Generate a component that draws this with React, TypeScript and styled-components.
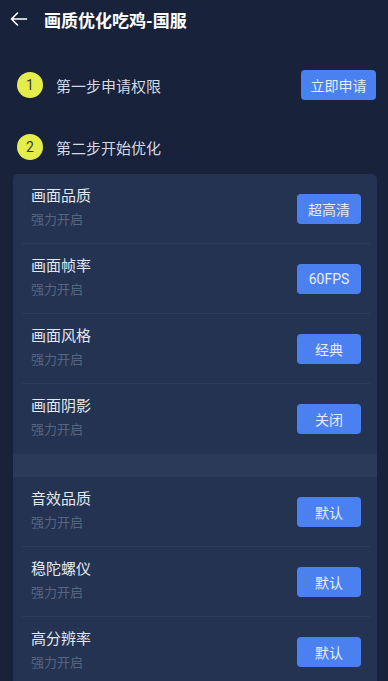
import React from 'react';
import styled, { createGlobalStyle } from 'styled-components';

const GlobalStyle = createGlobalStyle`
  html, body {
    margin: 0;
    padding: 0;
    background-color: #18223a;
    font-family: Roboto, "Noto Sans CJK SC", sans-serif;
  }
`;

const Page = styled.div`
  width: 388px;
  min-height: 681px;
  background-color: #18223a;
  overflow: hidden;
`;

const Header = styled.div`
  display: flex;
  align-items: center;
  height: 38px;
  padding-left: 9px;
`;

const BackIcon = styled.svg`
  width: 19px;
  height: 18px;
  margin-right: 16px;
`;

const Title = styled.div`
  font-size: 17px;
  font-weight: 700;
  color: #ffffff;
`;

const Steps = styled.div`
  display: flex;
  flex-direction: column;
  gap: 32px;
  padding: 32px 12px 0 17px;
`;

const StepRow = styled.div`
  display: flex;
  align-items: center;
  height: 30px;
`;

const StepNum = styled.div`
  width: 26px;
  height: 26px;
  border-radius: 50%;
  background-color: #e4ee4a;
  color: #3a3d2c;
  font-size: 14px;
  display: flex;
  align-items: center;
  justify-content: center;
  margin-right: 13px;
`;

const StepText = styled.div`
  flex: 1;
  font-size: 15px;
  color: #d3d9e3;
`;

const Button = styled.div<{ $w: number }>`
  width: ${(p) => p.$w}px;
  height: 30px;
  border-radius: 4px;
  background-color: #4a80f0;
  color: #e8eefc;
  font-size: 14px;
  display: flex;
  align-items: center;
  justify-content: center;
  flex-shrink: 0;
`;

const Card = styled.div`
  margin: 12px 11px 0 13px;
  background-color: #243352;
  border-radius: 5px;
  overflow: hidden;
`;

const Row = styled.div<{ $last?: boolean }>`
  display: flex;
  align-items: center;
  height: 69px;
  margin: 0 7px 0 9px;
  padding: 0 9px;
  border-bottom: 1px solid ${(p) => (p.$last ? 'transparent' : '#2c3c5b')};
`;

const Info = styled.div`
  flex: 1;
  display: flex;
  flex-direction: column;
  gap: 5px;
  padding-bottom: 2px;
`;

const ItemTitle = styled.div`
  font-size: 15px;
  line-height: 20px;
  color: #e2e7ef;
`;

const ItemSub = styled.div`
  font-size: 13px;
  line-height: 18px;
  color: #56667f;
`;

const Band = styled.div`
  height: 23px;
  background-color: #2b3a58;
`;

const group1 = [
  { title: '画面品质', value: '超高清' },
  { title: '画面帧率', value: '60FPS' },
  { title: '画面风格', value: '经典' },
  { title: '画面阴影', value: '关闭' },
];

const group2 = [
  { title: '音效品质', value: '默认' },
  { title: '稳陀螺仪', value: '默认' },
  { title: '高分辨率', value: '默认' },
];

export default function App() {
  return (
    <Page>
      <GlobalStyle />
      <Header>
        <BackIcon viewBox="0 0 19 18" fill="none">
          <path d="M17.5 9H2.5M8.5 3L2.5 9l6 6" stroke="#ffffff" strokeWidth="1.6" strokeLinecap="round" strokeLinejoin="round" />
        </BackIcon>
        <Title>画质优化吃鸡-国服</Title>
      </Header>
      <Steps>
        <StepRow>
          <StepNum>1</StepNum>
          <StepText>第一步申请权限</StepText>
          <Button $w={75}>立即申请</Button>
        </StepRow>
        <StepRow>
          <StepNum>2</StepNum>
          <StepText>第二步开始优化</StepText>
        </StepRow>
      </Steps>
      <Card>
        {group1.map((it, i) => (
          <Row key={it.title} $last={i === group1.length - 1}>
            <Info>
              <ItemTitle>{it.title}</ItemTitle>
              <ItemSub>强力开启</ItemSub>
            </Info>
            <Button $w={64}>{it.value}</Button>
          </Row>
        ))}
        <Band />
        {group2.map((it) => (
          <Row key={it.title}>
            <Info>
              <ItemTitle>{it.title}</ItemTitle>
              <ItemSub>强力开启</ItemSub>
            </Info>
            <Button $w={64}>{it.value}</Button>
          </Row>
        ))}
      </Card>
    </Page>
  );
}
